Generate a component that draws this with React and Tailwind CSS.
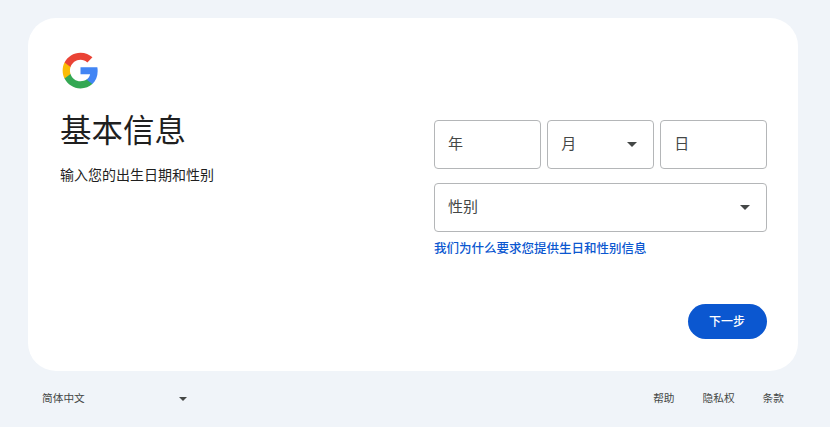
import React from 'react';

const font = { fontFamily: '"Roboto", "Noto Sans CJK SC", sans-serif' };

function GoogleLogo() {
  return (
    <svg width="39" height="39" viewBox="0 0 48 48" className="block ml-[1px]">
      <path fill="#4285F4" d="M45.12 24.5c0-1.56-.14-3.06-.4-4.5H24v8.51h11.84c-.51 2.75-2.06 5.08-4.39 6.64v5.52h7.11c4.16-3.83 6.56-9.47 6.56-16.17z" />
      <path fill="#34A853" d="M24 46c5.94 0 10.92-1.97 14.56-5.33l-7.11-5.52c-1.97 1.32-4.49 2.1-7.45 2.1-5.73 0-10.58-3.87-12.31-9.07H4.34v5.7C7.96 41.07 15.4 46 24 46z" />
      <path fill="#FBBC05" d="M11.69 28.18C11.25 26.86 11 25.45 11 24s.25-2.86.69-4.18v-5.7H4.34C2.85 17.09 2 20.45 2 24s.85 6.91 2.34 9.88l7.35-5.7z" />
      <path fill="#EA4335" d="M24 10.75c3.23 0 6.13 1.11 8.41 3.29l6.31-6.31C34.91 4.18 29.93 2 24 2 15.4 2 7.96 6.93 4.34 14.12l7.35 5.7c1.73-5.2 6.58-9.07 12.31-9.07z" />
    </svg>
  );
}

function Caret() {
  return <span className="block w-0 h-0 border-x-[5px] border-x-transparent border-t-[5px] border-t-[#444746]" />;
}

function Field({ label, caret, className = '' }) {
  return (
    <div className={`h-[49px] flex items-center justify-between pl-[13px] pr-[16px] border border-[#b4b6b8] rounded-[4px] text-[15px] text-[#444746] ${className}`}>
      <span>{label}</span>
      {caret && <Caret />}
    </div>
  );
}

export default function App() {
  return (
    <div className="w-[830px] h-[427px] overflow-hidden bg-[#f0f4f9]" style={font}>
      <div className="pt-[18px] pl-[28px] pr-[32px]">
        <div className="h-[353px] bg-white rounded-[28px] pl-[32px] pr-[31px] pt-[33px] flex justify-between">
          <div>
            <GoogleLogo />
            <h1 className="mt-[22px] text-[31.5px] leading-[40px] text-[#1f1f1f] font-normal">基本信息</h1>
            <p className="mt-[13px] text-[14px] leading-[20px] text-[#1f1f1f]">输入您的出生日期和性别</p>
          </div>
          <div className="w-[333px] pt-[69px]">
            <div className="flex gap-[6.5px]">
              <Field label="年" className="flex-1" />
              <Field label="月" caret className="flex-1" />
              <Field label="日" className="flex-1" />
            </div>
            <Field label="性别" caret className="mt-[14px]" />
            <a className="block mt-[8px] text-[12.5px] leading-[17px] font-medium text-[#0b57d0]">我们为什么要求您提供生日和性别信息</a>
            <div className="mt-[47px] flex justify-end">
              <button className="w-[79px] h-[35px] pr-[1px] rounded-full bg-[#0b57d0] text-white text-[12px] font-medium">下一步</button>
            </div>
          </div>
        </div>
        <div className="mt-[20px] pl-[14px] pr-[14px] flex items-center justify-between text-[10.7px] leading-[16px] text-[#444746]">
          <div className="w-[145px] flex items-center justify-between">
            <span>简体中文</span>
            <span className="block w-0 h-0 border-x-[4px] border-x-transparent border-t-[4px] border-t-[#444746]" />
          </div>
          <div className="flex gap-[28px]">
            <span>帮助</span>
            <span>隐私权</span>
            <span>条款</span>
          </div>
        </div>
      </div>
    </div>
  );
}
